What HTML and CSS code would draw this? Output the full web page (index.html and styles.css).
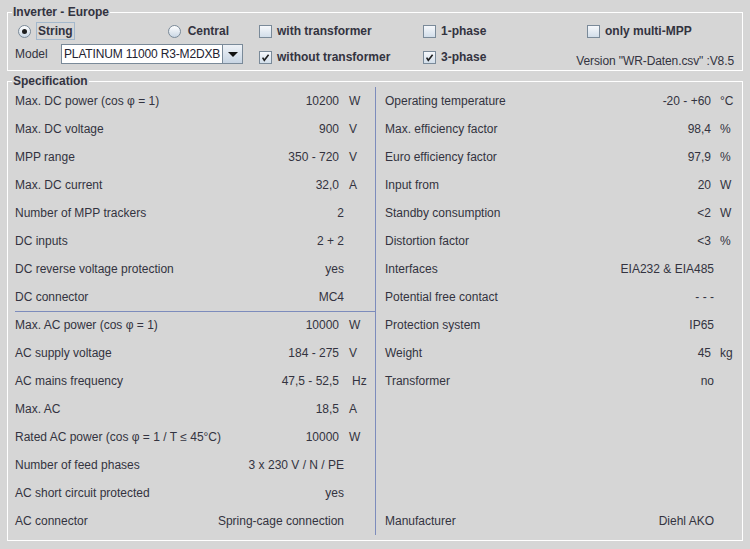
FILE: index.html
```html
<!DOCTYPE html>
<html>
<head>
<meta charset="utf-8">
<link rel="stylesheet" href="styles.css">
</head>
<body>
<fieldset class="group top">
  <legend>Inverter - Europe</legend>
  <div class="toprows">
    <div class="r1c1">
      <div class="radio on focus"><span class="dot"></span><span class="txt">String</span></div>
      <div class="radio"><span class="dot"></span><span class="txt">Central</span></div>
    </div>
    <div class="check"><span class="box"></span><span>with transformer</span></div>
    <div class="check"><span class="box"></span><span>1-phase</span></div>
    <div class="check"><span class="box"></span><span>only multi-MPP</span></div>

    <div class="r2c1">
      <span class="model-label">Model</span>
      <div class="combo"><span class="val">PLATINUM 11000 R3-M2DXB</span><span class="btn"></span></div>
    </div>
    <div class="check"><span class="box"><svg width="11" height="11" viewBox="0 0 11 11"><path d="M2.6 5.6 L4.3 8.3 L8.6 2.8" fill="none" stroke="#1e1e1e" stroke-width="1.6"/></svg></span><span>without transformer</span></div>
    <div class="check"><span class="box"><svg width="11" height="11" viewBox="0 0 11 11"><path d="M2.6 5.6 L4.3 8.3 L8.6 2.8" fill="none" stroke="#1e1e1e" stroke-width="1.6"/></svg></span><span>3-phase</span></div>
    <div class="version"><span>Version "WR-Daten.csv" :V8.5</span></div>
  </div>
</fieldset>

<fieldset class="group spec">
  <legend>Specification</legend>
  <div class="cols">
    <div class="left">
      <div class="dc">
        <div class="row"><span>Max. DC power (cos φ = 1)</span><span class="v">10200</span><span>W</span></div>
        <div class="row"><span>Max. DC voltage</span><span class="v">900</span><span>V</span></div>
        <div class="row"><span>MPP range</span><span class="v">350 - 720</span><span>V</span></div>
        <div class="row"><span>Max. DC current</span><span class="v">32,0</span><span>A</span></div>
        <div class="row"><span>Number of MPP trackers</span><span class="v w">2</span></div>
        <div class="row"><span>DC inputs</span><span class="v w">2 + 2</span></div>
        <div class="row"><span>DC reverse voltage protection</span><span class="v w">yes</span></div>
        <div class="row"><span>DC connector</span><span class="v w">MC4</span></div>
      </div>
      <div class="ac">
        <div class="row"><span>Max. AC power (cos φ = 1)</span><span class="v">10000</span><span>W</span></div>
        <div class="row"><span>AC supply voltage</span><span class="v">184 - 275</span><span>V</span></div>
        <div class="row"><span>AC mains frequency</span><span class="v">47,5 - 52,5</span><span class="hz">Hz</span></div>
        <div class="row"><span>Max. AC</span><span class="v">18,5</span><span>A</span></div>
        <div class="row"><span>Rated AC power (cos φ = 1 / T ≤ 45°C)</span><span class="v">10000</span><span>W</span></div>
        <div class="row"><span>Number of feed phases</span><span class="v w">3 x 230 V / N / PE</span></div>
        <div class="row"><span>AC short circuit protected</span><span class="v w">yes</span></div>
        <div class="row"><span>AC connector</span><span class="v w">Spring-cage connection</span></div>
      </div>
    </div>
    <div class="right">
      <div class="row"><span>Operating temperature</span><span class="v">-20 - +60</span><span>°C</span></div>
      <div class="row"><span>Max. efficiency factor</span><span class="v">98,4</span><span>%</span></div>
      <div class="row"><span>Euro efficiency factor</span><span class="v">97,9</span><span>%</span></div>
      <div class="row"><span>Input from</span><span class="v">20</span><span>W</span></div>
      <div class="row"><span>Standby consumption</span><span class="v">&lt;2</span><span>W</span></div>
      <div class="row"><span>Distortion factor</span><span class="v">&lt;3</span><span>%</span></div>
      <div class="row"><span>Interfaces</span><span class="v w">EIA232 &amp; EIA485</span></div>
      <div class="row"><span>Potential free contact</span><span class="v w">- - -</span></div>
      <div class="row"><span>Protection system</span><span class="v w">IP65</span></div>
      <div class="row"><span>Weight</span><span class="v">45</span><span>kg</span></div>
      <div class="row"><span>Transformer</span><span class="v w">no</span></div>
      <div class="row"></div>
      <div class="row"></div>
      <div class="row"></div>
      <div class="row"></div>
      <div class="row"><span>Manufacturer</span><span class="v w">Diehl AKO</span></div>
    </div>
  </div>
</fieldset>
</body>
</html>
```

FILE: styles.css
```css
html, body {
  margin: 0;
  padding: 0;
  background: #d6d6d6;
}
body {
  width: 750px;
  height: 549px;
  box-sizing: border-box;
  padding-top: 6px;
  overflow: hidden;
  font-family: "Liberation Sans", Arial, sans-serif;
  font-size: 12px;
  color: #333340;
}
fieldset.group {
  display: block;
  margin: 0 7px;
  padding: 0;
  border: 1px solid #ffffff;
  min-width: 0;
}
.group legend {
  font-weight: bold;
  font-size: 12px;
  line-height: 12px;
  padding: 0 1px;
  margin-left: 4px;
}
.spec {
  margin-top: 4px !important;
  padding-bottom: 5px !important;
}

/* top panel */
.toprows {
  display: grid;
  grid-template-columns: 251px 164px 164px minmax(0, 1fr);
  grid-template-rows: 26px 26px;
}
.r1c1 {
  display: flex;
  align-items: center;
  justify-content: space-between;
  padding: 0 28px 0 10px;
}
.radio {
  display: flex;
  align-items: center;
  gap: 5px;
  font-weight: bold;
}
.radio .dot {
  width: 11px;
  height: 11px;
  border: 1px solid #7a8a99;
  border-radius: 50%;
  background: linear-gradient(#ffffff, #cad7e5);
  display: flex;
  align-items: center;
  justify-content: center;
}
.radio.on .dot::after {
  content: "";
  width: 5px;
  height: 5px;
  border-radius: 50%;
  background: #1e1e1e;
}
.radio .txt {
  border: 1px solid transparent;
  padding: 1px;
  line-height: 14px;
}
.radio.focus .txt {
  border-color: #a3b8cc;
}
.check {
  display: flex;
  align-items: center;
  gap: 5px;
  font-weight: bold;
}
.check .box {
  width: 11px;
  height: 11px;
  border: 1px solid #7a8a99;
  background: linear-gradient(#f6f8fb, #d2deea);
  display: flex;
}
.check svg {
  display: block;
}
.r2c1 {
  display: flex;
  align-items: center;
  padding-left: 7px;
  align-self: start;
  height: 20px;
}
.model-label {
  width: 46px;
}
.combo {
  display: flex;
  width: 182px;
  height: 20px;
  box-sizing: border-box;
  border: 1px solid #7a8a99;
  background: #ffffff;
}
.combo .val {
  flex: 1;
  padding-left: 2px;
  line-height: 18px;
  letter-spacing: -0.15px;
  white-space: nowrap;
  overflow: hidden;
  color: #222230;
}
.combo .btn {
  width: 19px;
  flex: none;
  border-left: 1px solid #7a8a99;
  background: linear-gradient(#eef2f7, #c8d5e3);
  display: flex;
  align-items: center;
  justify-content: center;
}
.combo .btn::after {
  content: "";
  border-left: 5px solid transparent;
  border-right: 5px solid transparent;
  border-top: 5px solid #111111;
}
.version {
  display: flex;
  justify-content: flex-end;
  align-items: flex-end;
  white-space: nowrap;
  padding: 0 8px 2px 0;
  line-height: 14px;
  letter-spacing: -0.1px;
}

/* specification */
.cols {
  display: grid;
  grid-template-columns: 368px 1fr;
}
.left {
  border-right: 1px solid #7d8cbc;
  padding-left: 7px;
}
.right {
  padding: 0 2px 0 9px;
}
.row {
  display: grid;
  grid-template-columns: 1fr auto 20px;
  column-gap: 10px;
  height: 28px;
  line-height: 28px;
  white-space: nowrap;
}
.left .row {
  padding-right: 6px;
}
.right .row {
  column-gap: 9px;
}
.v {
  text-align: right;
}
.v.w {
  grid-column: 2 / 4;
  padding-right: 25px;
}
.right .v.w {
  padding-right: 26px;
}
.hz {
  padding-left: 3px;
}
.ac {
  border-top: 1px solid #7d8cbc;
}
.ac .row:first-child {
  height: 27px;
  line-height: 27px;
}
```
